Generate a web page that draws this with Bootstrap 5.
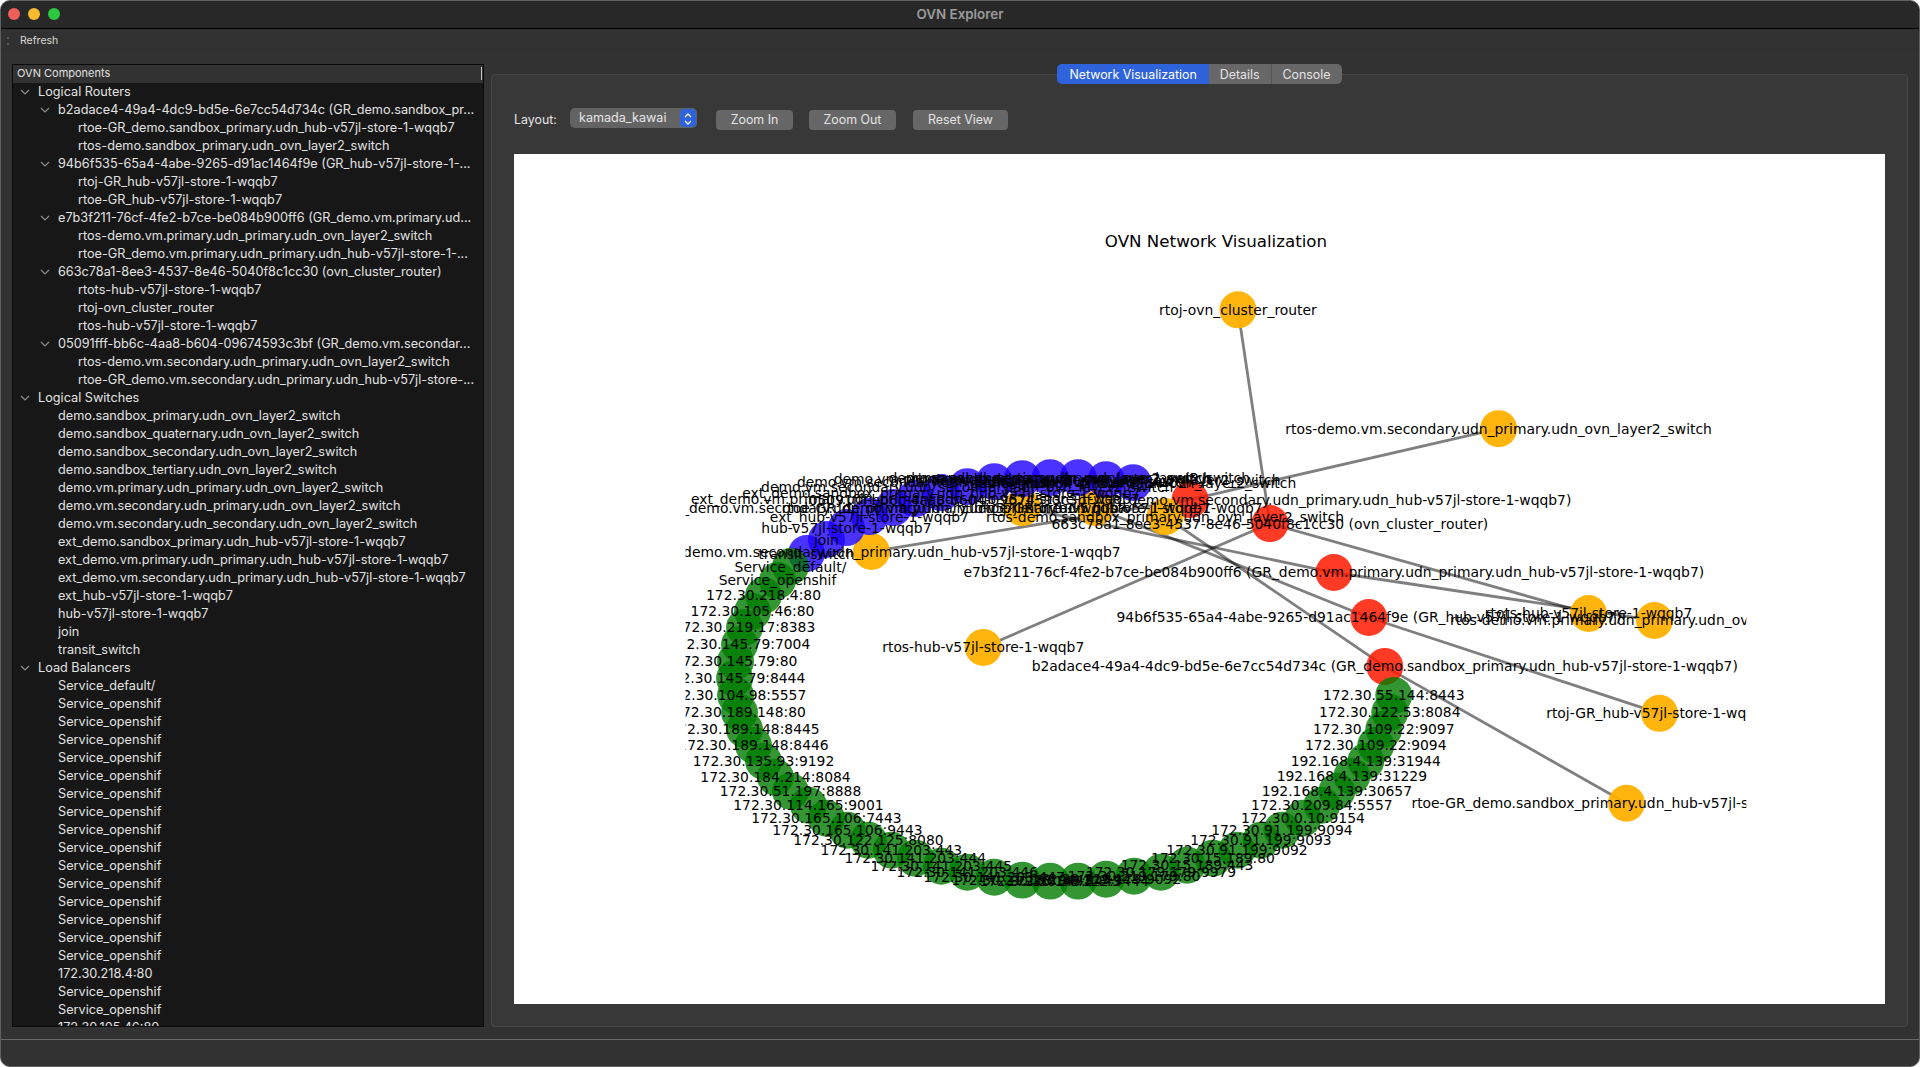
<!DOCTYPE html>
<html lang="en">
<head>
    <meta charset="UTF-8">
    <meta name="viewport" content="width=device-width, initial-scale=1.0">
    <title>OVN Explorer</title>
    <link href="https://cdn.jsdelivr.net/npm/bootstrap@5.3.0/dist/css/bootstrap.min.css" rel="stylesheet">
    <style>
        html, body { height: 100%; background: #fff; }
        body { font-family: Inter, "Liberation Sans", sans-serif; font-size: 12.7px; overflow: hidden; }
        .app-window { height: 1067px; background: #323232; border: 1px solid #5f5f5f; border-radius: 10px; overflow: hidden; color: #e4e4e4; }
        .title-bar { height: 28px; background: #282828; border-bottom: 1px solid #000; position: relative; flex: none; padding-bottom: 1px; }
        .title-text { font-size: 13.4px; font-weight: 600; color: #9b9b9b; }
        .traffic { position: absolute; top: 7px; left: 7px; }
        .traffic span { width: 12px; height: 12px; border-radius: 50%; display: block; }
        .tl-red { background: #ec5f58; }
        .tl-yellow { background: #f6bb2f; }
        .tl-green { background: #2cc840; }
        .tool-bar { height: 24px; background: #313131; flex: none; font-size: 10.5px; color: #d8d8d8; padding-left: 6px; }
        .grip { width: 2px; height: 8px; border-top: 2px solid #555; border-bottom: 2px solid #555; margin-right: 11px; }
        .main-area { padding: 11px 11px 12px 11px; min-height: 0; }
        .tree-box { width: 472px; flex: none; background: #171717; border: 1px solid #0a0a0a; overflow: hidden; }
        .tree-head { height: 18px; background: #323232; font-size: 11px; color: #e0e0e0; padding: 0 0 1px 4px; position: relative; }
        .tree-head::after { content: ""; position: absolute; right: 1px; top: 2px; height: 13px; border-right: 1px solid #c4c4c4; }
        .tree-row { height: 18px; color: #e2e2e2; white-space: nowrap; }
        .lvl-0 { padding-left: 5px; }
        .lvl-1 { padding-left: 25px; }
        .lvl-2 { padding-left: 45px; }
        .tw { width: 20px; flex: none; }
        .tw svg { display: block; margin-left: 2px; }
        .split-gap { width: 7px; flex: none; }
        .tab-panel { min-width: 0; }
        .tab-strip { height: 20px; margin-bottom: -10px; position: relative; z-index: 1; }
        .tab-btn { height: 20px; padding: 1px 11px 0; font-size: 12.4px; line-height: 19px; color: #e4e4e4; background: #676767; border: 0; border-radius: 0; white-space: nowrap; }
        .tab-btn:first-child { border-radius: 5px 0 0 5px; padding: 1px 12px 0; }
        .tab-btn:last-child { border-radius: 0 5px 5px 0; border-left: 1px solid #575757; }
        .tab-btn.on { background: #2f63dc; color: #fff; }
        .tab-body { background: #383838; border: 1px solid #474747; border-radius: 4px; padding: 33px 22px 22px; min-height: 0; }
        .ctrl-row { height: 22px; margin-bottom: 24px; font-size: 12.4px; }
        .ctrl-label { width: 56px; flex: none; color: #e4e4e4; padding-top: 2px; }
        .combo-wrap { width: 127px; height: 20px; position: relative; margin-top: -2px; margin-right: 19px; flex: none; }
        .layout-select { height: 20px; padding: 1px 0 0 9px; font-size: 12.6px; color: #e6e6e6; background: #636363; border: 0; border-radius: 5px; box-shadow: none; }
        .combo-arrow { position: absolute; right: 1px; top: 1px; width: 16px; height: 18px; background: #2f63dc; border-radius: 4px; pointer-events: none; }
        .view-btn { height: 20px; margin-top: 2px; padding: 0; font-size: 12.4px; line-height: 20px; color: #e4e4e4; background: #666; border: 0; border-radius: 4px; }
        .w-zin { width: 77px; margin-right: 16px; }
        .w-zout { width: 87px; margin-right: 17px; }
        .w-reset { width: 95px; }
        .plot-area { background: #fff; min-height: 0; }
        .plot-area svg { display: block; width: 100%; height: 100%; }
        .plot-area text { font-family: "DejaVu Sans", sans-serif; font-size: 13.9px; fill: #000; text-anchor: middle; dominant-baseline: central; }
        .plot-area text.plot-title { font-size: 16.7px; }
        .status-bar { height: 27px; flex: none; background: #323232; border-top: 1px solid #686868; }
    </style>
</head>
<body>
    <svg width="0" height="0" class="position-absolute">
        <symbol id="chev" viewBox="0 0 10 6"><path d="M1 1l4 4 4-4" fill="none" stroke="#8c8c8c" stroke-width="1.2"/></symbol>
        <symbol id="updown" viewBox="0 0 16 18"><path d="M5 7l3-3 3 3M5 11l3 3 3-3" fill="none" stroke="#fff" stroke-width="1.3"/></symbol>
    </svg>

    <div class="app-window d-flex flex-column">
        <div class="title-bar d-flex align-items-center justify-content-center">
            <div class="traffic d-flex gap-2">
                <span class="tl-red"></span><span class="tl-yellow"></span><span class="tl-green"></span>
            </div>
            <span class="title-text">OVN Explorer</span>
        </div>

        <div class="tool-bar d-flex align-items-center">
            <div class="grip"></div>
            <span>Refresh</span>
        </div>

        <div class="main-area d-flex flex-grow-1">
            <div class="tree-box">
                <div class="tree-head d-flex align-items-center">OVN Components</div>
                <ul class="list-unstyled m-0">
                    <li class="tree-row lvl-0 d-flex align-items-center"><span class="tw"><svg width="10" height="6"><use href="#chev"/></svg></span>Logical Routers</li>
                    <li class="tree-row lvl-1 d-flex align-items-center"><span class="tw"><svg width="10" height="6"><use href="#chev"/></svg></span>b2adace4-49a4-4dc9-bd5e-6e7cc54d734c (GR_demo.sandbox_pr...</li>
                    <li class="tree-row lvl-2 d-flex align-items-center"><span class="tw"></span>rtoe-GR_demo.sandbox_primary.udn_hub-v57jl-store-1-wqqb7</li>
                    <li class="tree-row lvl-2 d-flex align-items-center"><span class="tw"></span>rtos-demo.sandbox_primary.udn_ovn_layer2_switch</li>
                    <li class="tree-row lvl-1 d-flex align-items-center"><span class="tw"><svg width="10" height="6"><use href="#chev"/></svg></span>94b6f535-65a4-4abe-9265-d91ac1464f9e (GR_hub-v57jl-store-1-...</li>
                    <li class="tree-row lvl-2 d-flex align-items-center"><span class="tw"></span>rtoj-GR_hub-v57jl-store-1-wqqb7</li>
                    <li class="tree-row lvl-2 d-flex align-items-center"><span class="tw"></span>rtoe-GR_hub-v57jl-store-1-wqqb7</li>
                    <li class="tree-row lvl-1 d-flex align-items-center"><span class="tw"><svg width="10" height="6"><use href="#chev"/></svg></span>e7b3f211-76cf-4fe2-b7ce-be084b900ff6 (GR_demo.vm.primary.ud...</li>
                    <li class="tree-row lvl-2 d-flex align-items-center"><span class="tw"></span>rtos-demo.vm.primary.udn_primary.udn_ovn_layer2_switch</li>
                    <li class="tree-row lvl-2 d-flex align-items-center"><span class="tw"></span>rtoe-GR_demo.vm.primary.udn_primary.udn_hub-v57jl-store-1-...</li>
                    <li class="tree-row lvl-1 d-flex align-items-center"><span class="tw"><svg width="10" height="6"><use href="#chev"/></svg></span>663c78a1-8ee3-4537-8e46-5040f8c1cc30 (ovn_cluster_router)</li>
                    <li class="tree-row lvl-2 d-flex align-items-center"><span class="tw"></span>rtots-hub-v57jl-store-1-wqqb7</li>
                    <li class="tree-row lvl-2 d-flex align-items-center"><span class="tw"></span>rtoj-ovn_cluster_router</li>
                    <li class="tree-row lvl-2 d-flex align-items-center"><span class="tw"></span>rtos-hub-v57jl-store-1-wqqb7</li>
                    <li class="tree-row lvl-1 d-flex align-items-center"><span class="tw"><svg width="10" height="6"><use href="#chev"/></svg></span>05091fff-bb6c-4aa8-b604-09674593c3bf (GR_demo.vm.secondar...</li>
                    <li class="tree-row lvl-2 d-flex align-items-center"><span class="tw"></span>rtos-demo.vm.secondary.udn_primary.udn_ovn_layer2_switch</li>
                    <li class="tree-row lvl-2 d-flex align-items-center"><span class="tw"></span>rtoe-GR_demo.vm.secondary.udn_primary.udn_hub-v57jl-store-...</li>
                    <li class="tree-row lvl-0 d-flex align-items-center"><span class="tw"><svg width="10" height="6"><use href="#chev"/></svg></span>Logical Switches</li>
                    <li class="tree-row lvl-1 d-flex align-items-center"><span class="tw"></span>demo.sandbox_primary.udn_ovn_layer2_switch</li>
                    <li class="tree-row lvl-1 d-flex align-items-center"><span class="tw"></span>demo.sandbox_quaternary.udn_ovn_layer2_switch</li>
                    <li class="tree-row lvl-1 d-flex align-items-center"><span class="tw"></span>demo.sandbox_secondary.udn_ovn_layer2_switch</li>
                    <li class="tree-row lvl-1 d-flex align-items-center"><span class="tw"></span>demo.sandbox_tertiary.udn_ovn_layer2_switch</li>
                    <li class="tree-row lvl-1 d-flex align-items-center"><span class="tw"></span>demo.vm.primary.udn_primary.udn_ovn_layer2_switch</li>
                    <li class="tree-row lvl-1 d-flex align-items-center"><span class="tw"></span>demo.vm.secondary.udn_primary.udn_ovn_layer2_switch</li>
                    <li class="tree-row lvl-1 d-flex align-items-center"><span class="tw"></span>demo.vm.secondary.udn_secondary.udn_ovn_layer2_switch</li>
                    <li class="tree-row lvl-1 d-flex align-items-center"><span class="tw"></span>ext_demo.sandbox_primary.udn_hub-v57jl-store-1-wqqb7</li>
                    <li class="tree-row lvl-1 d-flex align-items-center"><span class="tw"></span>ext_demo.vm.primary.udn_primary.udn_hub-v57jl-store-1-wqqb7</li>
                    <li class="tree-row lvl-1 d-flex align-items-center"><span class="tw"></span>ext_demo.vm.secondary.udn_primary.udn_hub-v57jl-store-1-wqqb7</li>
                    <li class="tree-row lvl-1 d-flex align-items-center"><span class="tw"></span>ext_hub-v57jl-store-1-wqqb7</li>
                    <li class="tree-row lvl-1 d-flex align-items-center"><span class="tw"></span>hub-v57jl-store-1-wqqb7</li>
                    <li class="tree-row lvl-1 d-flex align-items-center"><span class="tw"></span>join</li>
                    <li class="tree-row lvl-1 d-flex align-items-center"><span class="tw"></span>transit_switch</li>
                    <li class="tree-row lvl-0 d-flex align-items-center"><span class="tw"><svg width="10" height="6"><use href="#chev"/></svg></span>Load Balancers</li>
                    <li class="tree-row lvl-1 d-flex align-items-center"><span class="tw"></span>Service_default/</li>
                    <li class="tree-row lvl-1 d-flex align-items-center"><span class="tw"></span>Service_openshif</li>
                    <li class="tree-row lvl-1 d-flex align-items-center"><span class="tw"></span>Service_openshif</li>
                    <li class="tree-row lvl-1 d-flex align-items-center"><span class="tw"></span>Service_openshif</li>
                    <li class="tree-row lvl-1 d-flex align-items-center"><span class="tw"></span>Service_openshif</li>
                    <li class="tree-row lvl-1 d-flex align-items-center"><span class="tw"></span>Service_openshif</li>
                    <li class="tree-row lvl-1 d-flex align-items-center"><span class="tw"></span>Service_openshif</li>
                    <li class="tree-row lvl-1 d-flex align-items-center"><span class="tw"></span>Service_openshif</li>
                    <li class="tree-row lvl-1 d-flex align-items-center"><span class="tw"></span>Service_openshif</li>
                    <li class="tree-row lvl-1 d-flex align-items-center"><span class="tw"></span>Service_openshif</li>
                    <li class="tree-row lvl-1 d-flex align-items-center"><span class="tw"></span>Service_openshif</li>
                    <li class="tree-row lvl-1 d-flex align-items-center"><span class="tw"></span>Service_openshif</li>
                    <li class="tree-row lvl-1 d-flex align-items-center"><span class="tw"></span>Service_openshif</li>
                    <li class="tree-row lvl-1 d-flex align-items-center"><span class="tw"></span>Service_openshif</li>
                    <li class="tree-row lvl-1 d-flex align-items-center"><span class="tw"></span>Service_openshif</li>
                    <li class="tree-row lvl-1 d-flex align-items-center"><span class="tw"></span>Service_openshif</li>
                    <li class="tree-row lvl-1 d-flex align-items-center"><span class="tw"></span>172.30.218.4:80</li>
                    <li class="tree-row lvl-1 d-flex align-items-center"><span class="tw"></span>Service_openshif</li>
                    <li class="tree-row lvl-1 d-flex align-items-center"><span class="tw"></span>Service_openshif</li>
                    <li class="tree-row lvl-1 d-flex align-items-center"><span class="tw"></span>172.30.105.46:80</li>
                </ul>
            </div>

            <div class="split-gap"></div>

            <div class="tab-panel d-flex flex-column flex-grow-1">
                <div class="tab-strip d-flex justify-content-center">
                    <div class="d-flex">
                        <button type="button" class="btn tab-btn on">Network Visualization</button>
                        <button type="button" class="btn tab-btn">Details</button>
                        <button type="button" class="btn tab-btn">Console</button>
                    </div>
                </div>
                <div class="tab-body d-flex flex-column flex-grow-1">
                    <div class="ctrl-row d-flex align-items-center">
                        <span class="ctrl-label">Layout:</span>
                        <div class="combo-wrap">
                            <select class="form-select layout-select"><option>kamada_kawai</option></select>
                            <span class="combo-arrow"><svg width="16" height="18"><use href="#updown"/></svg></span>
                        </div>
                        <button type="button" class="btn view-btn w-zin">Zoom In</button>
                        <button type="button" class="btn view-btn w-zout">Zoom Out</button>
                        <button type="button" class="btn view-btn w-reset">Reset View</button>
                    </div>
                    <div class="plot-area flex-grow-1">
                        <svg id="graph" viewBox="514 154 1371 851" xmlns="http://www.w3.org/2000/svg">
                            <defs><clipPath id="figclip"><rect x="685" y="154" width="1062" height="851"/></clipPath></defs>
                        </svg>
                    </div>
                </div>
            </div>
        </div>

        <div class="status-bar"></div>
    </div>

    <script src="https://cdn.jsdelivr.net/npm/bootstrap@5.3.0/dist/js/bootstrap.bundle.min.js"></script>
    <script>
        const colors = { port: "#ffb100", router: "#ff1900", sw: "#1d00ff", lb: "#007c00" };

        const ports = {
            a: ["rtoj-ovn_cluster_router", 1238, 310],
            b: ["rtos-demo.vm.secondary.udn_primary.udn_ovn_layer2_switch", 1499, 429],
            c: ["rtoe-GR_demo.vm.secondary.udn_primary.udn_hub-v57jl-store-1-wqqb7", 871, 552],
            d: ["rtoe-GR_demo.vm.primary.udn_primary.udn_hub-v57jl-store-1-wqqb7", 1022, 508],
            e: ["rtoe-GR_hub-v57jl-store-1-wqqb7", 1095, 508],
            f: ["rtos-demo.sandbox_primary.udn_ovn_layer2_switch", 1165, 517],
            g: ["rtos-hub-v57jl-store-1-wqqb7", 983, 648],
            h: ["rtots-hub-v57jl-store-1-wqqb7", 1589, 614],
            i: ["rtos-demo.vm.primary.udn_primary.udn_ovn_layer2_switch", 1655, 621],
            j: ["rtoj-GR_hub-v57jl-store-1-wqqb7", 1660, 714],
            k: ["rtoe-GR_demo.sandbox_primary.udn_hub-v57jl-store-1-wqqb7", 1627, 804]
        };

        const routers = {
            r1: ["05091fff-bb6c-4aa8-b604-09674593c3bf (GR_demo.vm.secondary.udn_primary.udn_hub-v57jl-store-1-wqqb7)", 1190, 500],
            r2: ["663c78a1-8ee3-4537-8e46-5040f8c1cc30 (ovn_cluster_router)", 1270, 524],
            r3: ["e7b3f211-76cf-4fe2-b7ce-be084b900ff6 (GR_demo.vm.primary.udn_primary.udn_hub-v57jl-store-1-wqqb7)", 1334, 573],
            r4: ["94b6f535-65a4-4abe-9265-d91ac1464f9e (GR_hub-v57jl-store-1-wqqb7)", 1369, 618],
            r5: ["b2adace4-49a4-4dc9-bd5e-6e7cc54d734c (GR_demo.sandbox_primary.udn_hub-v57jl-store-1-wqqb7)", 1385, 667]
        };

        const edges = [
            ["r2", "a"], ["r2", "h"], ["r2", "g"], ["r1", "b"], ["r1", "c"],
            ["r3", "i"], ["r3", "d"], ["r4", "j"], ["r4", "e"], ["r5", "k"], ["r5", "f"]
        ];

        const switches = [
            ["demo.sandbox_primary.udn_ovn_layer2_switch", 1133, 483],
            ["demo.sandbox_quaternary.udn_ovn_layer2_switch", 1106, 480],
            ["demo.sandbox_secondary.udn_ovn_layer2_switch", 1078, 478],
            ["demo.sandbox_tertiary.udn_ovn_layer2_switch", 1050, 478],
            ["demo.vm.primary.udn_primary.udn_ovn_layer2_switch", 1022, 479],
            ["demo.vm.secondary.udn_primary.udn_ovn_layer2_switch", 994, 482],
            ["demo.vm.secondary.udn_secondary.udn_ovn_layer2_switch", 967, 487],
            ["ext_demo.sandbox_primary.udn_hub-v57jl-store-1-wqqb7", 941, 493],
            ["ext_demo.vm.primary.udn_primary.udn_hub-v57jl-store-1-wqqb7", 915, 499],
            ["ext_demo.vm.secondary.udn_primary.udn_hub-v57jl-store-1-wqqb7", 893, 508],
            ["ext_hub-v57jl-store-1-wqqb7", 869, 517],
            ["hub-v57jl-store-1-wqqb7", 846, 528],
            ["join", 826, 540],
            ["transit_switch", 806, 554]
        ];

        const balancers = [
            ["Service_default/", 790, 567], ["Service_openshif", 777, 581],
            ["172.30.218.4:80", 763, 596], ["172.30.105.46:80", 752, 612],
            ["172.30.219.17:8383", 744, 628], ["172.30.145.79:7004", 739, 645],
            ["172.30.145.79:80", 735, 662], ["172.30.145.79:8444", 734, 679],
            ["172.30.104.98:5557", 735, 696], ["172.30.189.148:80", 739, 713],
            ["172.30.189.148:8445", 744, 730], ["172.30.189.148:8446", 753, 746],
            ["172.30.135.93:9192", 763, 762], ["172.30.184.214:8084", 775, 778],
            ["172.30.51.197:8888", 790, 792], ["172.30.114.165:9001", 808, 806],
            ["172.30.165.106:7443", 826, 819], ["172.30.165.106:9443", 847, 831],
            ["172.30.122.125:8080", 868, 841], ["172.30.141.203:443", 891, 851],
            ["172.30.141.203:444", 915, 859], ["172.30.141.203:445", 941, 867],
            ["172.30.141.203:446", 967, 873], ["172.30.141.203:447", 994, 878],
            ["172.30.21.183:9443", 1022, 881], ["172.30.36.145:8443", 1050, 882],
            ["172.30.38.122:9444", 1078, 882], ["172.30.219.179:9092", 1106, 880],
            ["172.30.219.179:80", 1134, 877], ["172.30.179.179:9979", 1161, 873],
            ["172.30.15.189:443", 1187, 866],
            ["172.30.15.189:80", 1213, 859], ["172.30.91.199:9092", 1237, 851],
            ["172.30.91.199:9093", 1261, 841], ["172.30.91.199:9094", 1282, 831],
            ["172.30.0.10:9154", 1303, 819], ["172.30.209.84:5557", 1322, 806],
            ["192.168.4.139:30657", 1337, 792], ["192.168.4.139:31229", 1352, 777],
            ["192.168.4.139:31944", 1366, 762], ["172.30.109.22:9094", 1376, 746],
            ["172.30.109.22:9097", 1384, 730], ["172.30.122.53:8084", 1390, 713],
            ["172.30.55.144:8443", 1394, 696]
        ];

        const ns = "http://www.w3.org/2000/svg";
        const graph = document.getElementById("graph");

        function add(parent, tag, attrs) {
            const el = document.createElementNS(ns, tag);
            Object.keys(attrs).forEach(k => el.setAttribute(k, attrs[k]));
            parent.appendChild(el);
            return el;
        }

        const fig = add(graph, "g", { "clip-path": "url(#figclip)" });
        const nodes = Object.assign({}, ports, routers);

        edges.forEach(([from, to]) => {
            add(fig, "line", {
                x1: nodes[from][1], y1: nodes[from][2], x2: nodes[to][1], y2: nodes[to][2],
                stroke: "#000", "stroke-opacity": 0.5, "stroke-width": 2.8
            });
        });

        const groups = [
            [Object.values(routers), colors.router, 0.85],
            [Object.values(ports), colors.port, 0.95],
            [switches, colors.sw, 0.8],
            [balancers, colors.lb, 0.8]
        ];

        groups.forEach(([list, fill, alpha]) => {
            list.forEach(n => add(fig, "circle", { cx: n[1], cy: n[2], r: 18.5, fill: fill, "fill-opacity": alpha }));
        });

        groups.forEach(([list]) => {
            list.forEach(n => {
                add(fig, "text", { x: n[1], y: n[2] }).textContent = n[0];
            });
        });

        add(graph, "text", { x: 1216, y: 242, class: "plot-title" }).textContent = "OVN Network Visualization";
    </script>
</body>
</html>
